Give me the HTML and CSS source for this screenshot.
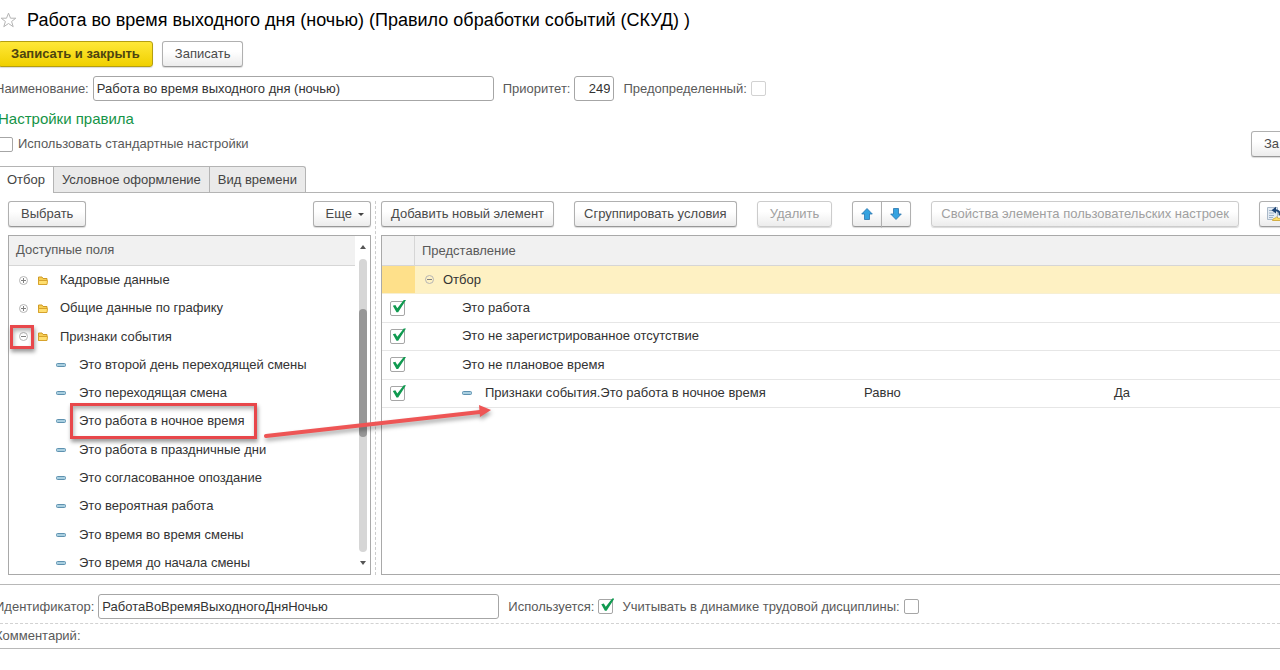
FILE: index.html
```html
<!DOCTYPE html>
<html lang="ru">
<head>
  <meta charset="UTF-8" />
  <meta name="viewport" content="width=device-width, initial-scale=1.0"/>
  <title>Правило обработки событий (СКУД)</title>
  <link rel="stylesheet" href="styles.css">
</head>
<body>
  <svg class="sprite" aria-hidden="true">
    <symbol id="plus" viewBox="0 0 9 9">
      <circle cx="4.5" cy="4.5" r="4" fill="#fff" stroke="#b4b4b4"/>
      <path d="M2 4.500h5M4.500 2v5" stroke="#808080"/>
    </symbol>
    <symbol id="minus" viewBox="0 0 9 9">
      <circle cx="4.5" cy="4.5" r="4" fill="none" stroke="#b4b4b4"/>
      <path d="M2 4.500h5" stroke="#808080"/>
    </symbol>
    <symbol id="folder" viewBox="0 0 10 9">
      <path d="M.5 8.500V1h3.500l1 1.500h4v2" fill="#f7cf55" stroke="#cf9a25"/>
      <path d="M.5 8.500V4.500h9L9 8.500z" fill="#ffdf70" stroke="#d7a32c"/>
    </symbol>
    <symbol id="leaf" viewBox="0 0 10 4">
      <rect x=".5" y=".5" width="9" height="3" rx="1" fill="#a9cfe0" stroke="#5f92b0"/>
    </symbol>
    <symbol id="arrow" viewBox="0 0 12 12">
      <path d="M6 .5l5.300 5.500H8.500v5.500h-5V6H.7z" fill="#35a3e0" stroke="#2874ad" stroke-width=".8"/>
    </symbol>
  </svg>

  <main class="form">
    <header class="title">
      <svg class="star" viewBox="0 0 17 16"><path d="M8.500 1.200l2 5h5.300l-4.200 3.300 1.600 5.200-4.700-3.200-4.700 3.200 1.600-5.200L1.200 6.200h5.300z" fill="#fff" stroke="#b4b4b4"/></svg>
      <h1>Работа во время выходного дня (ночью) (Правило обработки событий (СКУД) )</h1>
    </header>

    <div class="commands">
      <button class="btn primary">Записать и закрыть</button>
      <button class="btn">Записать</button>
    </div>

    <div class="fields">
      <label for="name">Наименование:</label>
      <input class="text" id="name" type="text" value="Работа во время выходного дня (ночью)">
      <label for="priority">Приоритет:</label>
      <input class="text number" id="priority" type="text" value="249">
      <label for="predefined">Предопределенный:</label>
      <input class="check" id="predefined" type="checkbox" disabled>
    </div>

    <h2>Настройки правила</h2>

    <div class="standard">
      <input class="check" id="standard" type="checkbox">
      <label for="standard">Использовать стандартные настройки</label>
      <button class="btn fill">За</button>
    </div>

    <div class="tabs" role="tablist">
      <button class="tab active" role="tab" aria-selected="true">Отбор</button>
      <button class="tab" role="tab">Условное оформление</button>
      <button class="tab" role="tab">Вид времени</button>
    </div>

    <div class="workspace">
      <section class="source">
        <div class="toolbar between">
          <button class="btn">Выбрать</button>
          <button class="btn more">Еще <span class="caret"></span></button>
        </div>
        <div class="panel available">
          <div class="list">
            <div class="panel-head">Доступные поля</div>
            <ul class="tree">
              <li><button class="toggle" aria-label="Развернуть"><svg><use href="#plus"/></svg></button><svg class="folder"><use href="#folder"/></svg>Кадровые данные</li>
              <li><button class="toggle" aria-label="Развернуть"><svg><use href="#plus"/></svg></button><svg class="folder"><use href="#folder"/></svg>Общие данные по графику</li>
              <li><button class="toggle" aria-label="Свернуть"><svg><use href="#minus"/></svg></button><svg class="folder"><use href="#folder"/></svg>Признаки события</li>
              <li class="child"><svg class="leaf"><use href="#leaf"/></svg>Это второй день переходящей смены</li>
              <li class="child"><svg class="leaf"><use href="#leaf"/></svg>Это переходящая смена</li>
              <li class="child"><svg class="leaf"><use href="#leaf"/></svg>Это работа в ночное время</li>
              <li class="child"><svg class="leaf"><use href="#leaf"/></svg>Это работа в праздничные дни</li>
              <li class="child"><svg class="leaf"><use href="#leaf"/></svg>Это согласованное опоздание</li>
              <li class="child"><svg class="leaf"><use href="#leaf"/></svg>Это вероятная работа</li>
              <li class="child"><svg class="leaf"><use href="#leaf"/></svg>Это время во время смены</li>
              <li class="child"><svg class="leaf"><use href="#leaf"/></svg>Это время до начала смены</li>
            </ul>
          </div>
          <div class="scrollbar">
            <span class="up"></span>
            <div class="track"><div class="thumb"></div></div>
            <span class="down"></span>
          </div>
        </div>
      </section>

      <div class="splitter"></div>

      <section class="filter">
        <div class="toolbar">
          <button class="btn wide">Добавить новый элемент</button>
          <button class="btn wide">Сгруппировать условия</button>
          <button class="btn" disabled>Удалить</button>
          <div class="pair">
            <button class="btn icon" aria-label="Вверх"><svg><use href="#arrow"/></svg></button>
            <button class="btn icon flip" aria-label="Вниз"><svg><use href="#arrow"/></svg></button>
          </div>
          <button class="btn wide" disabled>Свойства элемента пользовательских настроек</button>
          <button class="btn reset" aria-label="Настройки">
            <svg viewBox="0 0 16 16">
              <path d="M1.500 1.500h10v12h-10z" fill="#e3ebf3" stroke="#a9b8c8"/>
              <path d="M3 4.500h4M3 7h5M3 9.500h5M3 11.500h4" stroke="#9fb3c8"/>
              <path d="M13.500 9.500c.6-3.200-1-5.200-4-5.300" fill="none" stroke="#1d4577" stroke-width="2"/>
              <path d="M5.500 4.200L10 .8v6.600z" fill="#1d4577"/>
              <path d="M6.500 14.500c.3-2 1.700-2 2.500-2.200l1.500-1.300 1.700 1.200c2 0 3 .8 3.300 2.300z" fill="#ffe066" stroke="#c9a02b" stroke-width=".8"/>
            </svg>
          </button>
        </div>
        <div class="panel conditions">
          <table>
            <colgroup><col class="c-use"><col class="c-name"><col class="c-kind"><col></colgroup>
            <thead>
              <tr><th></th><th colspan="3">Представление</th></tr>
            </thead>
            <tbody>
              <tr class="current">
                <td></td>
                <td colspan="3"><div class="cell root"><button class="toggle" aria-label="Свернуть"><svg><use href="#minus"/></svg></button>Отбор</div></td>
              </tr>
              <tr>
                <td><input class="check" type="checkbox" aria-label="Это работа" checked></td>
                <td colspan="3"><div class="cell group">Это работа</div></td>
              </tr>
              <tr>
                <td><input class="check" type="checkbox" aria-label="Это не зарегистрированное отсутствие" checked></td>
                <td colspan="3"><div class="cell group">Это не зарегистрированное отсутствие</div></td>
              </tr>
              <tr>
                <td><input class="check" type="checkbox" aria-label="Это не плановое время" checked></td>
                <td colspan="3"><div class="cell group">Это не плановое время</div></td>
              </tr>
              <tr>
                <td><input class="check" type="checkbox" aria-label="Признаки события.Это работа в ночное время" checked></td>
                <td><div class="cell group"><svg class="leaf"><use href="#leaf"/></svg>Признаки события.Это работа в ночное время</div></td>
                <td>Равно</td>
                <td>Да</td>
              </tr>
            </tbody>
          </table>
        </div>
      </section>

      <!-- red marks over the tree and the table -->
      <div class="mark mark-toggle"></div>
      <div class="mark mark-field"></div>
      <svg class="mark-arrow" viewBox="0 0 232 40">
        <path d="M3 33L217 9" stroke="#ee5555" stroke-width="4" stroke-linecap="round"/>
        <path d="M228 7L216 2l1 12z" fill="#ee5555"/>
      </svg>
    </div>

    <div class="fields ident">
      <label for="ident">Идентификатор:</label>
      <input class="text" id="ident" type="text" value="РаботаВоВремяВыходногоДняНочью">
      <label for="used">Используется:</label>
      <input class="check" id="used" type="checkbox" checked>
      <label for="discipline">Учитывать в динамике трудовой дисциплины:</label>
      <input class="check" id="discipline" type="checkbox">
    </div>

    <div class="comment">
      <label for="comment">Комментарий:</label>
      <input id="comment" type="text">
    </div>
  </main>
</body>
</html>
```

FILE: styles.css
```css
* { box-sizing: border-box; }

body {
  margin: 0;
  background: #fff;
  color: #333;
  font-family: "Liberation Sans", Arial, sans-serif;
  font-size: 13px;
  line-height: 16px;
  overflow: hidden;
}

button, input {
  font: inherit;
  color: inherit;
  margin: 0;
}

svg { display: block; flex: none; }

.sprite {
  position: absolute;
  width: 0;
  height: 0;
}

label { color: #595959; white-space: nowrap; }

/* header */
.title {
  display: flex;
  align-items: center;
  gap: 10px;
  height: 39px;
}

.star { width: 17px; height: 16px; }

h1 {
  margin: 0;
  color: #000;
  font-size: 18px;
  font-weight: normal;
  line-height: 24px;
  white-space: nowrap;
}

h2 {
  margin: 8px 0 0 -2px;
  color: #159447;
  font-size: 15px;
  font-weight: normal;
  line-height: 20px;
}

/* buttons */
.btn {
  display: flex;
  flex: none;
  align-items: center;
  justify-content: center;
  height: 26px;
  padding: 0 12px;
  border: 1px solid #b0b0b0;
  border-bottom-color: #989898;
  border-radius: 3px;
  background: linear-gradient(#fff 40%, #ececec);
  box-shadow: 0 1px 1px rgba(0, 0, 0, 0.15);
  color: #4a4a4a;
  white-space: nowrap;
}

.btn:disabled {
  border-color: #ccc;
  color: #a0a0a0;
}

.btn.wide { padding: 0 9px; }

.btn.primary {
  border-color: #b59f10;
  background: linear-gradient(#ffe838, #f0d000);
  color: #4d4410;
  font-weight: bold;
}

.commands {
  display: flex;
  gap: 9px;
  margin-top: 2px;
  margin-left: -2px;
}

/* input rows */
.fields {
  display: flex;
  align-items: center;
  gap: 4px;
  margin: 9px 0 0 -5px;
}

.fields input + label { margin-left: 5px; }

.text {
  width: 401px;
  height: 25px;
  padding: 0 3px;
  border: 1px solid #a6a6a6;
  border-radius: 3px;
  background: #fff;
}

.text.number {
  width: 40px;
  text-align: right;
}

.check {
  position: relative;
  display: block;
  flex: none;
  width: 15px;
  height: 15px;
  border: 1px solid #a6a6a6;
  border-radius: 2px;
  background: #fff;
  appearance: none;
}

.check:disabled { border-color: #d2d2d2; }

.check:checked::after {
  content: "";
  position: absolute;
  top: -2px;
  left: 1px;
  width: 14px;
  height: 13px;
  background: #109a50;
  clip-path: polygon(6% 48%, 24% 42%, 38% 67%, 84% 4%, 100% 4%, 44% 98%, 32% 98%);
}

.standard {
  display: flex;
  align-items: center;
  gap: 5px;
  height: 26px;
  margin: 2px -12px 0 -2px;
}

.standard .fill { margin-left: auto; }

/* tabs */
.tabs {
  display: flex;
  margin-top: 9px;
  margin-left: -1px;
  border-bottom: 1px solid #b4b4b4;
}

.tab {
  height: 26px;
  padding: 0 8px;
  border: 1px solid #b4b4b4;
  border-left-width: 0;
  border-bottom: 0;
  background: #eaeaea;
  color: #444;
  white-space: nowrap;
}

.tab:last-child { border-top-right-radius: 3px; }

.tab.active {
  height: 27px;
  margin-bottom: -1px;
  background: #fff;
}

/* two panes */
.workspace {
  position: relative;
  display: flex;
  padding: 8px 0 9px 8px;
  border-bottom: 1px solid #b8b8b8;
}

.source { flex: none; width: 363px; }

.filter {
  flex: 1;
  min-width: 0;
}

.splitter {
  width: 5px;
  margin-right: 5px;
  border-right: 1px dashed #ccc;
}

.toolbar {
  display: flex;
  gap: 20px;
  margin-bottom: 8px;
}

.between { justify-content: space-between; }

.more { gap: 6px; padding-right: 6px; }

.caret {
  border: 3px solid transparent;
  border-top-color: #444;
  border-bottom: 0;
}

.pair { display: flex; }

.icon {
  width: 30px;
  padding: 0;
  border-radius: 3px 0 0 3px;
}

.icon svg { width: 12px; height: 12px; }

.flip {
  margin-left: -1px;
  border-radius: 0 3px 3px 0;
}

.flip svg { transform: rotate(180deg); }

.reset { padding: 0 6px; }
.reset svg { width: 16px; height: 16px; }

.panel {
  height: 340px;
  border: 1px solid #a9a9a9;
  overflow: hidden;
}

.available { display: flex; }
.conditions { border-right: 0; }
.list { flex: 1; }

.panel-head {
  height: 30px;
  padding: 6px 7px;
  border-bottom: 1px solid #d6d6d6;
  background: #f1f1f1;
  color: #595959;
}

.tree {
  display: grid;
  grid-auto-rows: 1fr;
  height: 311px;
  margin: 0;
  padding: 0;
  list-style: none;
}

.tree li {
  display: flex;
  align-items: center;
  padding-left: 10px;
  white-space: nowrap;
}

.tree .child { padding-left: 47px; }

.toggle {
  width: 9px;
  height: 11px;
  padding: 0;
  border: 0;
  background: none;
}

.toggle svg { width: 9px; height: 9px; }

.folder {
  width: 10px;
  height: 9px;
  margin: 0 12px 0 10px;
}

.leaf {
  width: 10px;
  height: 4px;
  margin-right: 13px;
}

.scrollbar {
  display: flex;
  flex-direction: column;
  align-items: center;
  width: 15px;
  padding: 9px 0;
}

.track {
  flex: 1;
  width: 8px;
  margin: 10px 0 9px;
  padding-top: 50px;
  border-radius: 4px;
  background: #d6d6d6;
}

.thumb {
  height: 128px;
  border-radius: 4px;
  background: #979797;
}

.up, .down {
  border: 3px solid transparent;
  border-top-width: 0;
  border-bottom: 4px solid #555;
}

.down {
  border-top: 4px solid #555;
  border-bottom-width: 0;
}

/* conditions */
table {
  width: 100%;
  height: 172px;
  border-collapse: separate;
  border-spacing: 0;
  table-layout: fixed;
}

.c-use { width: 33px; }
.c-name { width: 439px; }
.c-kind { width: 250px; }

th {
  height: 30px;
  padding: 0 7px;
  border-bottom: 1px solid #d6d6d6;
  background: #f1f1f1;
  color: #595959;
  font-weight: normal;
  text-align: left;
}

th:first-child { border-right: 1px solid #d6d6d6; }

td {
  height: 28px;
  padding: 0 10px;
  border-bottom: 1px solid #e6e6e6;
  white-space: nowrap;
}

td:first-child { padding: 0 8px; }

.current td {
  border-color: #f7efd2;
  background: #fef1c3;
}

.current td:first-child { background: #fee08a; }

.cell {
  display: flex;
  align-items: center;
}

.root { gap: 9px; }
.group { padding-left: 37px; }

/* marks */
.mark {
  position: absolute;
  border: 3px solid #e8474b;
  box-shadow: 1px 3px 4px rgba(0, 0, 0, 0.4), inset 1px 3px 4px rgba(0, 0, 0, 0.3);
}

.mark-toggle {
  top: 132px;
  left: 10px;
  width: 24px;
  height: 24px;
}

.mark-field {
  top: 210px;
  left: 70px;
  width: 187px;
  height: 36px;
}

.mark-arrow {
  position: absolute;
  top: 210px;
  left: 263px;
  width: 232px;
  height: 40px;
  filter: drop-shadow(1px 3px 2px rgba(0, 0, 0, 0.35));
  pointer-events: none;
}

/* bottom */
.ident {
  margin-top: 0;
  padding: 9px 0 4px;
  border-bottom: 1px dashed #d2d2d2;
}

.comment {
  display: flex;
  align-items: center;
  height: 25px;
  margin-left: -5px;
  border-bottom: 1px solid #b8b8b8;
}

.comment input {
  flex: 1;
  border: 0;
  outline: 0;
}
```
